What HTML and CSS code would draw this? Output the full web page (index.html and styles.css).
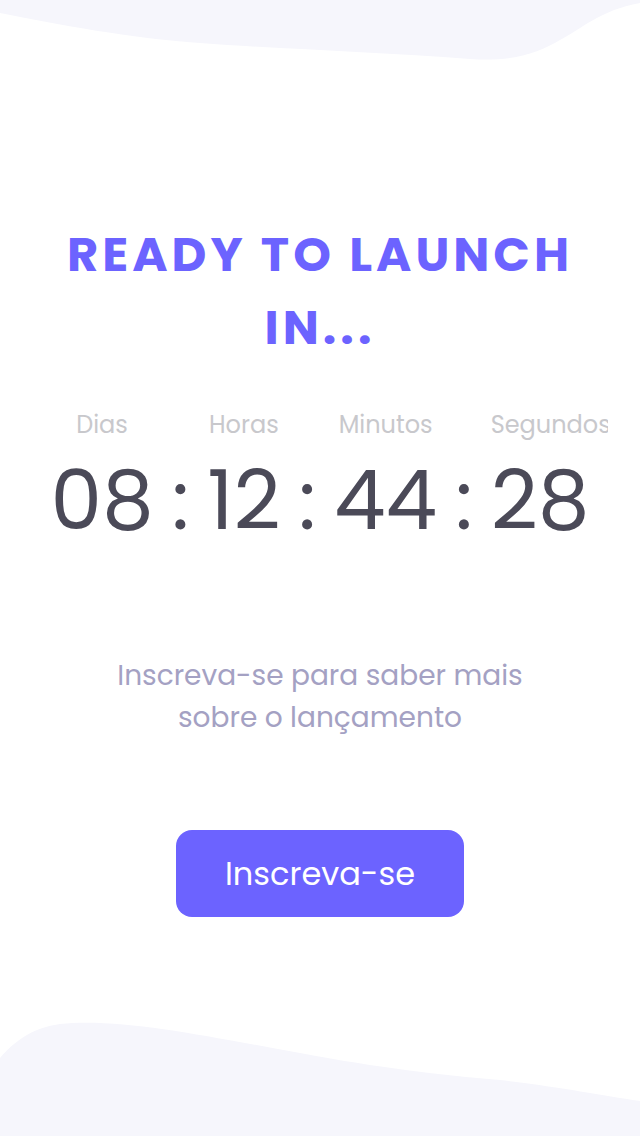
FILE: index.html
```html
<!DOCTYPE html>
<html lang="pt">
<head>
<meta charset="utf-8">
<title>Ready to launch</title>
<link rel="stylesheet" href="styles.css">
</head>
<body>
<div class="page">
  <svg class="wave wave-top" width="640" height="70" viewBox="0 0 640 70" aria-hidden="true">
    <path d="M0 0 L0 13 C60 25 130 38 200 43 C280 49 380 52 470 59 C515 62 540 52 560 40 C580 30 600 10 640 3 L640 0 Z" fill="#f6f6fc"/>
  </svg>
  <svg class="wave wave-bottom" width="640" height="126" viewBox="0 0 640 126" aria-hidden="true">
    <path d="M0 48 C12 34 30 18 60 14 C120 8 200 25 300 43 C380 58 440 65 500 70 C560 77 600 85 640 91 L640 126 L0 126 Z" fill="#f6f6fc"/>
  </svg>

  <main class="content">
    <h1 class="title">READY TO LAUNCH IN...</h1>

    <div class="timer">
      <div class="unit">
        <span class="label">Dias</span>
        <span class="num">08</span>
      </div>
      <span class="sep">:</span>
      <div class="unit">
        <span class="label">Horas</span>
        <span class="num">12</span>
      </div>
      <span class="sep">:</span>
      <div class="unit">
        <span class="label">Minutos</span>
        <span class="num">44</span>
      </div>
      <span class="sep">:</span>
      <div class="unit">
        <span class="label">Segundos</span>
        <span class="num">28</span>
      </div>
    </div>

    <p class="lead">Inscreva-se para saber mais<br>sobre o lançamento</p>

    <button class="cta" type="button">Inscreva-se</button>
  </main>
</div>
</body>
</html>
```

FILE: styles.css
```css
* { box-sizing: border-box; }

html, body {
  margin: 0;
  padding: 0;
  background: #ffffff;
}

body {
  font-family: "Poppins", "Open Sans", "DejaVu Sans", sans-serif;
}

.page {
  position: relative;
  width: 640px;
  min-height: 1136px;
  overflow: hidden;
}

.wave {
  position: absolute;
  left: 0;
  display: block;
}
.wave-top { top: 0; }
.wave-bottom { top: 1010px; }

.content {
  position: relative;
  display: flex;
  flex-direction: column;
  align-items: center;
  padding-top: 218px;
}

.title {
  margin: 0;
  width: 560px;
  text-align: center;
  color: #6c63ff;
  font-size: 48px;
  font-weight: 700;
  letter-spacing: 4px;
  line-height: 73px;
}

.timer {
  margin-top: 43px;
  width: 576px;
  overflow: hidden;
  display: flex;
  justify-content: center;
  align-items: flex-end;
  gap: 18px;
}

.unit {
  display: flex;
  flex-direction: column;
  gap: 14px;
}

.label {
  display: block;
  width: 0;
  min-width: 100%;
  text-align: center;
  font-size: 24px;
  line-height: 36px;
  color: #c8c8cc;
  white-space: nowrap;
}

.num,
.sep {
  display: block;
  font-size: 82px;
  line-height: 88px;
  font-weight: 400;
  color: #4b4a58;
}

.lead {
  margin: 110px 0 0;
  text-align: center;
  font-size: 28px;
  line-height: 42px;
  color: #a4a1c3;
}

.cta {
  margin-top: 91px;
  width: 288px;
  height: 87px;
  border: 0;
  border-radius: 16px;
  background: #6c63ff;
  color: #ffffff;
  font-family: inherit;
  font-size: 32px;
  font-weight: 400;
  cursor: pointer;
}
```
